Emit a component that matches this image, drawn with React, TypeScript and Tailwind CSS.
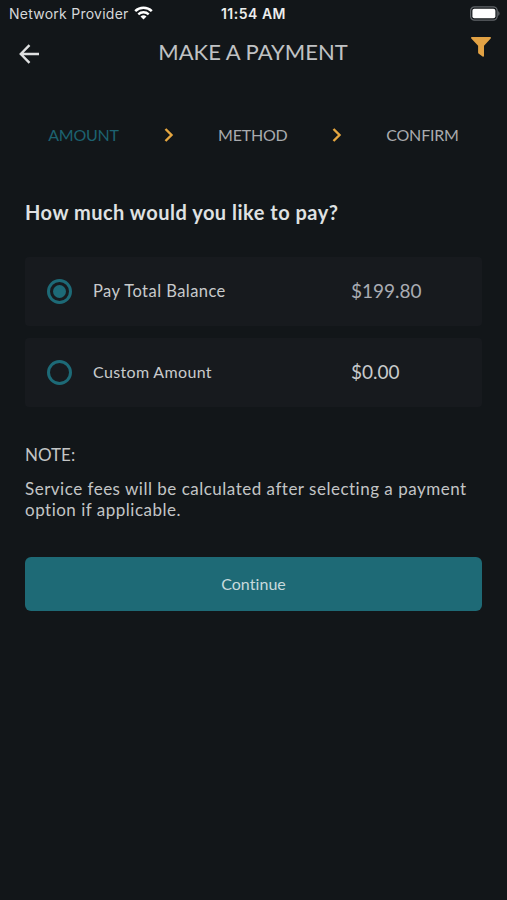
import { useState } from "react"

interface StepProps {
    label: string
    width: string
    active?: boolean
}

interface OptionProps {
    label: string
    labelClass: string
    amount: string
    amountClass: string
    selected: boolean
    onSelect: () => void
}

function StatusBar() {
    return (
        <div className="grid h-7 grid-cols-3 items-center pl-[9px] pr-[7px] font-['Inter',sans-serif] text-white">
            <div className="flex items-center gap-[5px]">
                <span className="whitespace-nowrap text-[14px] leading-5 tracking-[0.25px] text-[#d6d8d9]">Network Provider</span>
                <svg width="19" height="14" viewBox="0 0 19 14" fill="none" className="-mt-[2px] shrink-0">
                    <path d="M1.2 5.1a11.8 11.8 0 0 1 16.6 0" stroke="white" strokeWidth="2.5" />
                    <path d="M4.3 8.4a7.4 7.4 0 0 1 10.4 0" stroke="white" strokeWidth="2.3" />
                    <path d="M9.5 13.6 6.5 10.6a4.3 4.3 0 0 1 6 0z" fill="white" />
                </svg>
            </div>
            <span className="-ml-[2px] whitespace-nowrap text-center text-[14px] font-semibold leading-5 tracking-[0.5px] text-[#eceded]">11:54 AM</span>
            <svg width="30" height="15" viewBox="0 0 30 15" className="-mt-[2px] justify-self-end">
                <rect x="0.6" y="0.9" width="26.6" height="13.2" rx="4" fill="none" stroke="#62666a" strokeWidth="1.3" />
                <rect x="2.4" y="2.7" width="23" height="9.6" rx="2" fill="white" />
                <path d="M28.2 5.2c1.8.6 1.8 4 0 4.6z" fill="#62666a" />
            </svg>
        </div>
    )
}

function Step({ label, width, active }: StepProps) {
    return (
        <span className={`${width} whitespace-nowrap text-center text-[16px] leading-6 tracking-[-0.2px] ${active ? "text-[#1d6270]" : "text-[#a9abae]"}`}>
            {label}
        </span>
    )
}

function Chevron() {
    return (
        <svg width="10" height="16" viewBox="0 0 10 16" fill="none" stroke="#e5a640" strokeWidth="2.4">
            <path d="M1.5 2l6 6-6 6" />
        </svg>
    )
}

function Option({ label, labelClass, amount, amountClass, selected, onSelect }: OptionProps) {
    return (
        <button onClick={onSelect} className="flex h-[69px] w-full items-center rounded-[4px] bg-[#171a1e] pl-[22px] text-left">
            <span className="flex size-[25px] items-center justify-center rounded-full border-3 border-[#1d6a77]">
                {selected && <span className="size-[13px] rounded-full bg-[#1d6a77]" />}
            </span>
            <span className={`-mt-px ml-[21px] w-[258px] leading-6 text-[#c8cacc] ${labelClass}`}>{label}</span>
            <span className={`-mt-[2px] text-[19px] leading-6 ${amountClass}`}>{amount}</span>
        </button>
    )
}

export default function App() {
    const [selected, setSelected] = useState("total")

    return (
        <div className="h-[900px] w-[507px] overflow-hidden bg-[#121619] font-['Lato',sans-serif]">
            <StatusBar />

            <header className="flex h-12 items-center justify-between pl-[19px] pr-4">
                <svg width="21" height="20" viewBox="0 0 21 20" fill="none" stroke="#dfe0e1" strokeWidth="2.4" className="mt-1">
                    <path d="M20 10H2M10.5 1.2 1.8 10l8.700 8.800" />
                </svg>
                <h1 className="mr-[5px] whitespace-nowrap text-[22px] leading-8 text-[#c0c2c4]">MAKE A PAYMENT</h1>
                <svg width="20" height="20" viewBox="0 0 20 20" fill="#e2a244" className="-mt-[10px]">
                    <path d="M.8 0h18.400c.8 0 1 .8.500 1.400L13 8.700v10.100c0 .9-.7 1.200-1.400.7l-3.800-2.700c-.5-.4-.7-.8-.7-1.400V8.700L.3 1.400C-.2.8 0 0 .8 0z" />
                </svg>
            </header>

            <nav className="mt-[47px] flex h-6 items-center justify-between px-12">
                <Step label="AMOUNT" width="w-[71px]" active />
                <Chevron />
                <Step label="METHOD" width="w-[69px]" />
                <Chevron />
                <Step label="CONFIRM" width="w-[73px]" />
            </nav>

            <main className="px-[25px]">
                <h2 className="mt-[51px] whitespace-nowrap text-[20px] font-bold leading-7 tracking-[0.5px] text-[#dfe1e2]">How much would you like to pay?</h2>

                <div className="mt-[31px] flex w-[457px] flex-col gap-3">
                    <Option
                        label="Pay Total Balance"
                        labelClass="text-[16.5px] tracking-[0.45px]"
                        amount="$199.80"
                        amountClass="text-[#a9acb2]"
                        selected={selected === "total"}
                        onSelect={() => setSelected("total")}
                    />
                    <Option
                        label="Custom Amount"
                        labelClass="text-[16px] tracking-[0.35px]"
                        amount="$0.00"
                        amountClass="text-[#c8cacc]"
                        selected={selected === "custom"}
                        onSelect={() => setSelected("custom")}
                    />
                </div>

                <p className="mt-[37px] text-[17px] leading-[21px] text-[#c3c5c6]">NOTE:</p>
                <p className="mt-[13px] whitespace-nowrap text-[17px] leading-[21px] tracking-[0.5px] text-[#c3c5c6]">
                    Service fees will be calculated after selecting a payment
                    <br />
                    option if applicable.
                </p>

                <button className="mt-[37px] h-[54px] w-[457px] rounded-[6px] bg-[#1e6a76] text-[16px] leading-6 tracking-[0.05px] text-[#c7dadd]">
                    Continue
                </button>
            </main>
        </div>
    )
}
